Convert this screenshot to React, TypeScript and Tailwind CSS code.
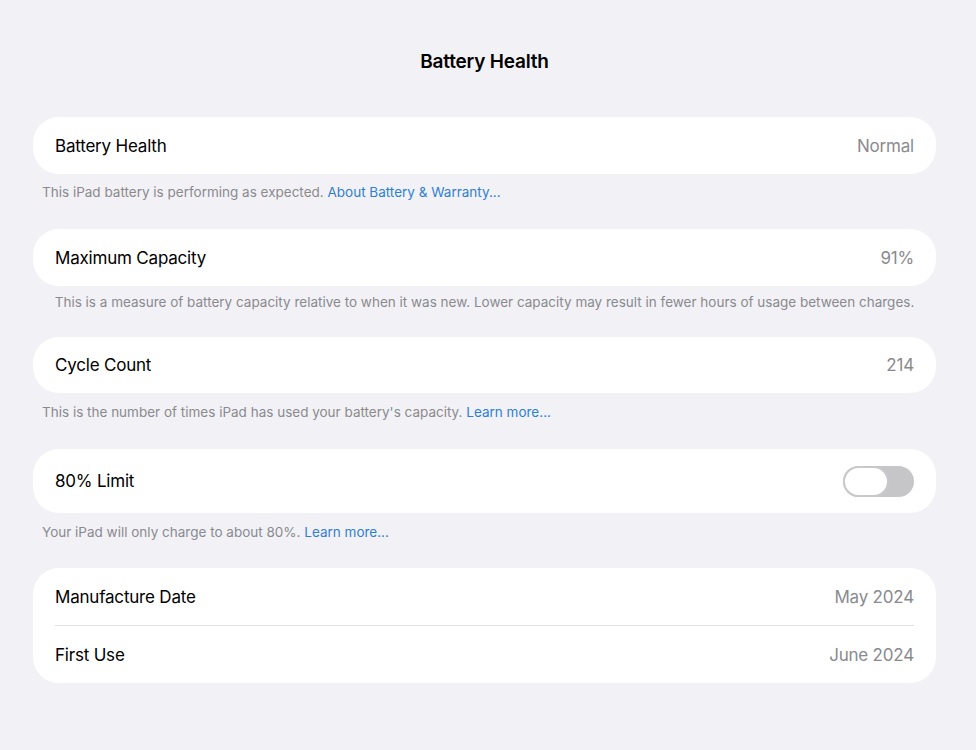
import React from "react";

const font = { fontFamily: "Inter, 'Noto Sans', sans-serif" };

function Row({ label, value, h = "h-[57px]" }: { label: string; value?: React.ReactNode; h?: string }) {
  return (
    <div className={`flex items-center justify-between ${h} px-[22px] pt-[2px]`}>
      <span className="text-[17px] text-black tracking-[-0.2px]">{label}</span>
      {typeof value === "string" ? (
        <span className="text-[17px] text-[#8a8a8e] tracking-[-0.2px]">{value}</span>
      ) : (
        value
      )}
    </div>
  );
}

function Card({ children }: { children: React.ReactNode }) {
  return <div className="bg-white rounded-[26px] overflow-hidden">{children}</div>;
}

function Footer({ children, center = false, mt }: { children: React.ReactNode; center?: boolean; mt: string }) {
  return (
    <p className={`text-[13.5px] text-[#8a8a8e] leading-[18px] ${center ? "text-center" : "pl-[9px]"} ${mt}`}>
      {children}
    </p>
  );
}

const Link = ({ children }: { children: React.ReactNode }) => <span className="text-[#2f7fd3]">{children}</span>;

function Toggle() {
  return (
    <div className="relative w-[71px] h-[31px] -mt-[2px] rounded-full bg-[#c6c6c8]">
      <div className="absolute left-0 top-0 w-[46px] h-[31px] rounded-full bg-white border-[2px] border-[#c9c9cb]" />
    </div>
  );
}

export default function App() {
  return (
    <div className="min-h-[750px] w-full bg-[#f2f2f6]" style={font}>
      <div className="pl-[33px] pr-[40px] pt-[49px] pb-[60px] w-[976px]">
        <h1 className="text-center text-[19px] font-semibold text-black leading-[26px] tracking-[-0.2px]">Battery Health</h1>
        <div className="mt-[42px]">
          <Card>
            <Row label="Battery Health" value="Normal" />
          </Card>
          <Footer mt="mt-[9px]">
            This iPad battery is performing as expected. <Link>About Battery &amp; Warranty...</Link>
          </Footer>
        </div>
        <div className="mt-[28px]">
          <Card>
            <Row label="Maximum Capacity" value="91%" />
          </Card>
          <Footer center mt="mt-[7px]">
            This is a measure of battery capacity relative to when it was new. Lower capacity may result in fewer hours of usage between charges.
          </Footer>
        </div>
        <div className="mt-[26px]">
          <Card>
            <Row label="Cycle Count" value="214" h="h-[56px]" />
          </Card>
          <Footer mt="mt-[10px]">
            This is the number of times iPad has used your battery's capacity. <Link>Learn more...</Link>
          </Footer>
        </div>
        <div className="mt-[28px]">
          <Card>
            <Row label="80% Limit" value={<Toggle />} h="h-[64px]" />
          </Card>
          <Footer mt="mt-[10px]">
            Your iPad will only charge to about 80%. <Link>Learn more...</Link>
          </Footer>
        </div>
        <div className="mt-[27px]">
          <Card>
            <Row label="Manufacture Date" value="May 2024" />
            <div className="mx-[22px] h-px bg-[#e0e0e3]" />
            <Row label="First Use" value="June 2024" />
          </Card>
        </div>
      </div>
    </div>
  );
}
